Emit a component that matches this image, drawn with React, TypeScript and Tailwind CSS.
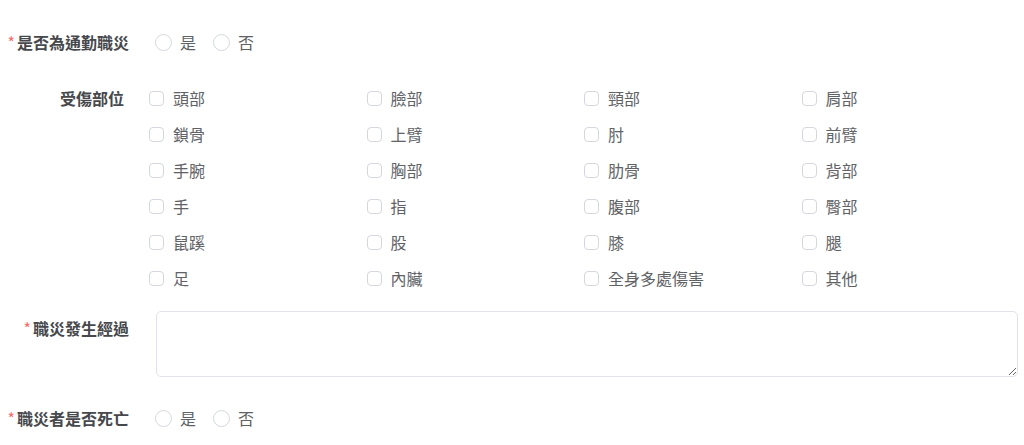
import React, { useState } from 'react';

const PARTS = [
  '頭部', '臉部', '頸部', '肩部',
  '鎖骨', '上臂', '肘', '前臂',
  '手腕', '胸部', '肋骨', '背部',
  '手', '指', '腹部', '臀部',
  '鼠蹊', '股', '膝', '腿',
  '足', '內臟', '全身多處傷害', '其他',
];

const Radio: React.FC<{ label: string; checked: boolean; onClick: () => void }> = ({ label, checked, onClick }) => (
  <label className="flex items-center cursor-pointer mr-[17px]" onClick={onClick}>
    <span
      className={`w-[17px] h-[17px] rounded-full border flex items-center justify-center ${
        checked ? 'border-[#409eff] bg-[#409eff]' : 'border-[#d4d7de] bg-white'
      }`}
    >
      {checked && <span className="w-[5px] h-[5px] rounded-full bg-white" />}
    </span>
    <span className="ml-[8px] text-[16px] text-[#606266]">{label}</span>
  </label>
);

const YesNo: React.FC = () => {
  const [value, setValue] = useState<string | null>(null);
  return (
    <div className="flex items-center">
      <Radio label="是" checked={value === 'yes'} onClick={() => setValue('yes')} />
      <Radio label="否" checked={value === 'no'} onClick={() => setValue('no')} />
    </div>
  );
};

const RequiredLabel: React.FC<{ text: string }> = ({ text }) => (
  <div className="w-[129px] shrink-0 text-right text-[16px] font-bold text-[#46484c] leading-none">
    <span className="text-[#f56c6c] mr-[2px] font-normal">*</span>
    {text}
  </div>
);

export default function App() {
  const [parts, setParts] = useState<string[]>([]);

  const toggle = (p: string) =>
    setParts(prev => (prev.includes(p) ? prev.filter(x => x !== p) : [...prev, p]));

  return (
    <div
      className="bg-white w-[1024px] h-[445px] overflow-hidden pt-[24px]"
      style={{ fontFamily: '"Noto Sans CJK TC", "Noto Sans", sans-serif' }}
    >
      {/* 是否為通勤職災 */}
      <div className="flex items-center h-[36px]">
        <RequiredLabel text="是否為通勤職災" />
        <div className="ml-[26px]">
          <YesNo />
        </div>
      </div>

      {/* 受傷部位 */}
      <div className="flex mt-[20px]">
        <div className="w-[124px] shrink-0 h-[36px] flex items-center justify-end text-[16px] font-bold text-[#46484c]">
          受傷部位
        </div>
        <div className="ml-[25px] w-[870px] grid grid-cols-4">
          {PARTS.map(p => {
            const checked = parts.includes(p);
            return (
              <label key={p} className="h-[36px] flex items-center cursor-pointer" onClick={() => toggle(p)}>
                <span
                  className={`w-[15px] h-[15px] rounded-[4px] border ${
                    checked ? 'border-[#409eff] bg-[#409eff]' : 'border-[#d4d7de] bg-white'
                  }`}
                />
                <span className="ml-[9px] text-[16px] text-[#606266]">{p}</span>
              </label>
            );
          })}
        </div>
      </div>

      {/* 職災發生經過 */}
      <div className="flex mt-[15px]">
        <div className="pt-[9px]">
          <RequiredLabel text="職災發生經過" />
        </div>
        <textarea className="ml-[27px] w-[862px] h-[66px] border border-[#e0e3e9] rounded-[5px] outline-none px-[12px] py-[6px] text-[14px] text-[#606266]" />
      </div>

      {/* 職災者是否死亡 */}
      <div className="flex items-center h-[36px] mt-[23px]">
        <RequiredLabel text="職災者是否死亡" />
        <div className="ml-[26px]">
          <YesNo />
        </div>
      </div>
    </div>
  );
}
